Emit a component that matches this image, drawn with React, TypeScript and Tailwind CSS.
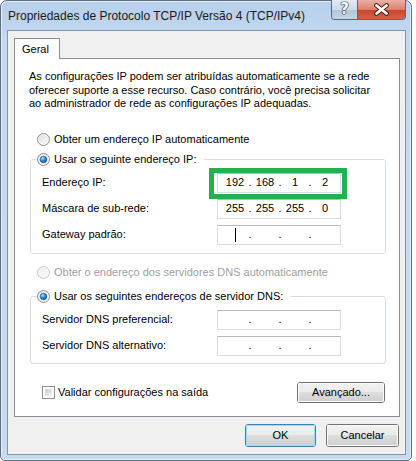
import React from 'react';

const Radio = ({ checked = false, disabled = false }: { checked?: boolean; disabled?: boolean }) => (
  <svg width="13" height="13" viewBox="0 0 13 13" className="shrink-0">
    <defs>
      <linearGradient id="rbg" x1="0" y1="0" x2="1" y2="1">
        <stop offset="0" stopColor="#dedede" />
        <stop offset="1" stopColor="#fafafa" />
      </linearGradient>
      <linearGradient id="rbgd" x1="0" y1="0" x2="1" y2="1">
        <stop offset="0" stopColor="#ececec" />
        <stop offset="1" stopColor="#fbfbfb" />
      </linearGradient>
      <radialGradient id="rdot" cx="0.35" cy="0.3" r="0.85">
        <stop offset="0" stopColor="#a8e4ff" />
        <stop offset="0.45" stopColor="#2b8fd8" />
        <stop offset="1" stopColor="#0b3a78" />
      </radialGradient>
    </defs>
    <circle cx="6.5" cy="6.5" r="6" fill={disabled ? 'url(#rbgd)' : 'url(#rbg)'} stroke={disabled ? '#c8c8c8' : '#8e8e8e'} />
    <circle cx="6.5" cy="6.5" r="4.6" fill="none" stroke={disabled ? '#f4f4f4' : '#f2f2f2'} strokeWidth="0.8" />
    {checked && <circle cx="6.5" cy="6.5" r="3.3" fill="url(#rdot)" stroke="#1b4b86" strokeWidth="0.6" />}
  </svg>
);

const Checkbox = () => (
  <div className="w-[13px] h-[13px] border border-[#8e8f8f] bg-white p-[2px] shrink-0">
    <div className="w-full h-full bg-[linear-gradient(135deg,#c9ccd1,#f4f4f4)]" />
  </div>
);

const IpField = ({ octets, caret = false }: { octets?: string[]; caret?: boolean }) => (
  <div className="w-[124px] h-[20px] border border-[#dadde2] border-t-[#b5b8bf] bg-white flex items-center pl-[6px]">
    {[0, 1, 2, 3].map((i) => (
      <React.Fragment key={i}>
        <span className="w-[22px] flex justify-center">
          {caret && i === 0 ? <span className="w-px h-[14px] bg-black" /> : octets?.[i] ?? ''}
        </span>
        {i < 3 && <span className="w-[8px] text-center">.</span>}
      </React.Fragment>
    ))}
  </div>
);

const Row = ({ label, children }: { label: string; children: React.ReactNode }) => (
  <div className="flex items-center h-[20px]">
    <span className="w-[175px]">{label}</span>
    {children}
  </div>
);

const Btn = ({ children, primary = false, className = '' }: { children: React.ReactNode; primary?: boolean; className?: string }) => (
  <div className={`rounded-[3px] border ${primary ? 'border-[#3c7fb1]' : 'border-[#707070]'} ${className}`}>
    <div
      className={`h-full rounded-[2px] flex items-center justify-center bg-[linear-gradient(#f2f2f2_0%,#ebebeb_45%,#dddddd_50%,#cfcfcf_100%)] ${
        primary ? 'shadow-[inset_0_0_0_1px_#9bdcf7]' : 'shadow-[inset_0_0_0_1px_#fbfbfb]'
      }`}
    >
      {children}
    </div>
  </div>
);

export default function App() {
  return (
    <div className="w-[416px] h-[461px] bg-white font-['Liberation_Sans',Arial,sans-serif] text-[11px] text-black overflow-hidden">
      <div className="relative w-[412px] h-[461px] rounded-t-[7px] rounded-b-[5px] border border-[#5d6e83] bg-[linear-gradient(180deg,#b7cfea_0%,#c4d9f0_40px,#c6daf0_100%)] shadow-[inset_0_0_0_1px_#e4eefa] flex flex-col">
        {/* title */}
        <div className="h-[29px] flex items-center pl-[7px] text-[12px] text-[#1a1a1a] shrink-0">
          Propriedades de Protocolo TCP/IP Versão 4 (TCP/IPv4)
        </div>

        {/* caption buttons */}
        <div className="absolute -top-px right-[5px] flex h-[20px] border border-t-0 border-[#5a6a7e] rounded-b-[4px] overflow-hidden">
          <div className="w-[26px] h-full bg-[linear-gradient(#e3ebf5_0%,#cdd9e7_50%,#b4c5d9_51%,#c5d4e5_100%)] flex items-center justify-center border-r border-[#5a6a7e]">
            <span className="text-[15px] font-bold leading-none text-white font-['DejaVu_Sans',sans-serif] [text-shadow:0_0_1px_#2a3442,0_0_1px_#2a3442,0_0_1px_#2a3442,0_0_1px_#2a3442]">?</span>
          </div>
          <div className="w-[47px] h-full bg-[linear-gradient(#eab1a4_0%,#dd7f6c_50%,#c8432b_51%,#d5614a_100%)] flex items-center justify-center">
            <svg width="17" height="13" viewBox="0 0 17 13">
              <path d="M3.5 2.5 L13.5 10.5 M13.5 2.5 L3.5 10.5" stroke="#4a1a12" strokeWidth="4.6" strokeLinecap="round" />
              <path d="M3.5 2.5 L13.5 10.5 M13.5 2.5 L3.5 10.5" stroke="#ffffff" strokeWidth="2.8" strokeLinecap="round" />
            </svg>
          </div>
        </div>

        {/* client area */}
        <div className="ml-[6px] mr-[5px] mb-[5px] flex-1 border border-[#8394aa] bg-[#f0f0f0] flex flex-col">
          {/* tab header */}
          <div className="ml-[6px] mt-[7px] flex">
            <div className="relative z-10 -mb-px w-[46px] h-[21px] border border-b-0 border-[#898c95] bg-white pl-[7px] flex items-center">
              Geral
            </div>
          </div>
          {/* panel */}
          <div className="ml-[6px] mr-[5px] h-[359px] border border-[#898c95] bg-white flex flex-col">
            <p className="ml-[14px] mt-[11px] leading-[13.5px]">
              As configurações IP podem ser atribuídas automaticamente se a rede
              <br />
              oferecer suporte a esse recurso. Caso contrário, você precisa solicitar
              <br />
              ao administrador de rede as configurações IP adequadas.
            </p>

            <div className="ml-[22px] mt-[21px] h-[16px] flex items-center gap-[4px]">
              <Radio />
              <span>Obter um endereço IP automaticamente</span>
            </div>

            <fieldset className="ml-[15px] mr-[13px] mt-[4px] border border-[#d5dfe5] rounded-[3px] p-0">
              <legend className="ml-[6px] pr-[8px] h-[16px] flex items-center gap-[4px]">
                <Radio checked />
                <span>Usar o seguinte endereço IP:</span>
              </legend>
              <div className="pl-[11px] pt-[5px] pb-[8px] flex flex-col gap-[6px]">
                <Row label="Endereço IP:">
                  <div className="relative">
                    <IpField octets={['192', '168', '1', '2']} />
                    <div className="absolute -left-[8px] -top-[5px] w-[138px] h-[31px] border-[5px] border-[#22b14c]" />
                  </div>
                </Row>
                <Row label="Máscara de sub-rede:">
                  <IpField octets={['255', '255', '255', '0']} />
                </Row>
                <Row label="Gateway padrão:">
                  <IpField caret />
                </Row>
              </div>
            </fieldset>

            <div className="ml-[22px] mt-[11px] h-[16px] flex items-center gap-[4px] text-[#a0a0a0]">
              <Radio disabled />
              <span>Obter o endereço dos servidores DNS automaticamente</span>
            </div>

            <fieldset className="ml-[15px] mr-[13px] mt-[8px] border border-[#d5dfe5] rounded-[3px] p-0">
              <legend className="ml-[6px] pr-[8px] h-[16px] flex items-center gap-[4px]">
                <Radio checked />
                <span>Usar os seguintes endereços de servidor DNS:</span>
              </legend>
              <div className="pl-[11px] pt-[5px] pb-[7px] flex flex-col gap-[6px]">
                <Row label="Servidor DNS preferencial:">
                  <IpField />
                </Row>
                <Row label="Servidor DNS alternativo:">
                  <IpField />
                </Row>
              </div>
            </fieldset>

            <div className="mt-[18px] ml-[27px] mr-[14px] flex items-center justify-between">
              <div className="flex items-center gap-[3px]">
                <Checkbox />
                <span>Validar configurações na saída</span>
              </div>
              <Btn className="w-[88px] h-[21px]">Avançado...</Btn>
            </div>
          </div>

          {/* dialog buttons */}
          <div className="mt-[7px] mr-[6px] flex justify-end gap-[10px]">
            <Btn primary className="w-[71px] h-[23px]">OK</Btn>
            <Btn className="w-[73px] h-[23px]">Cancelar</Btn>
          </div>
        </div>
      </div>
    </div>
  );
}
